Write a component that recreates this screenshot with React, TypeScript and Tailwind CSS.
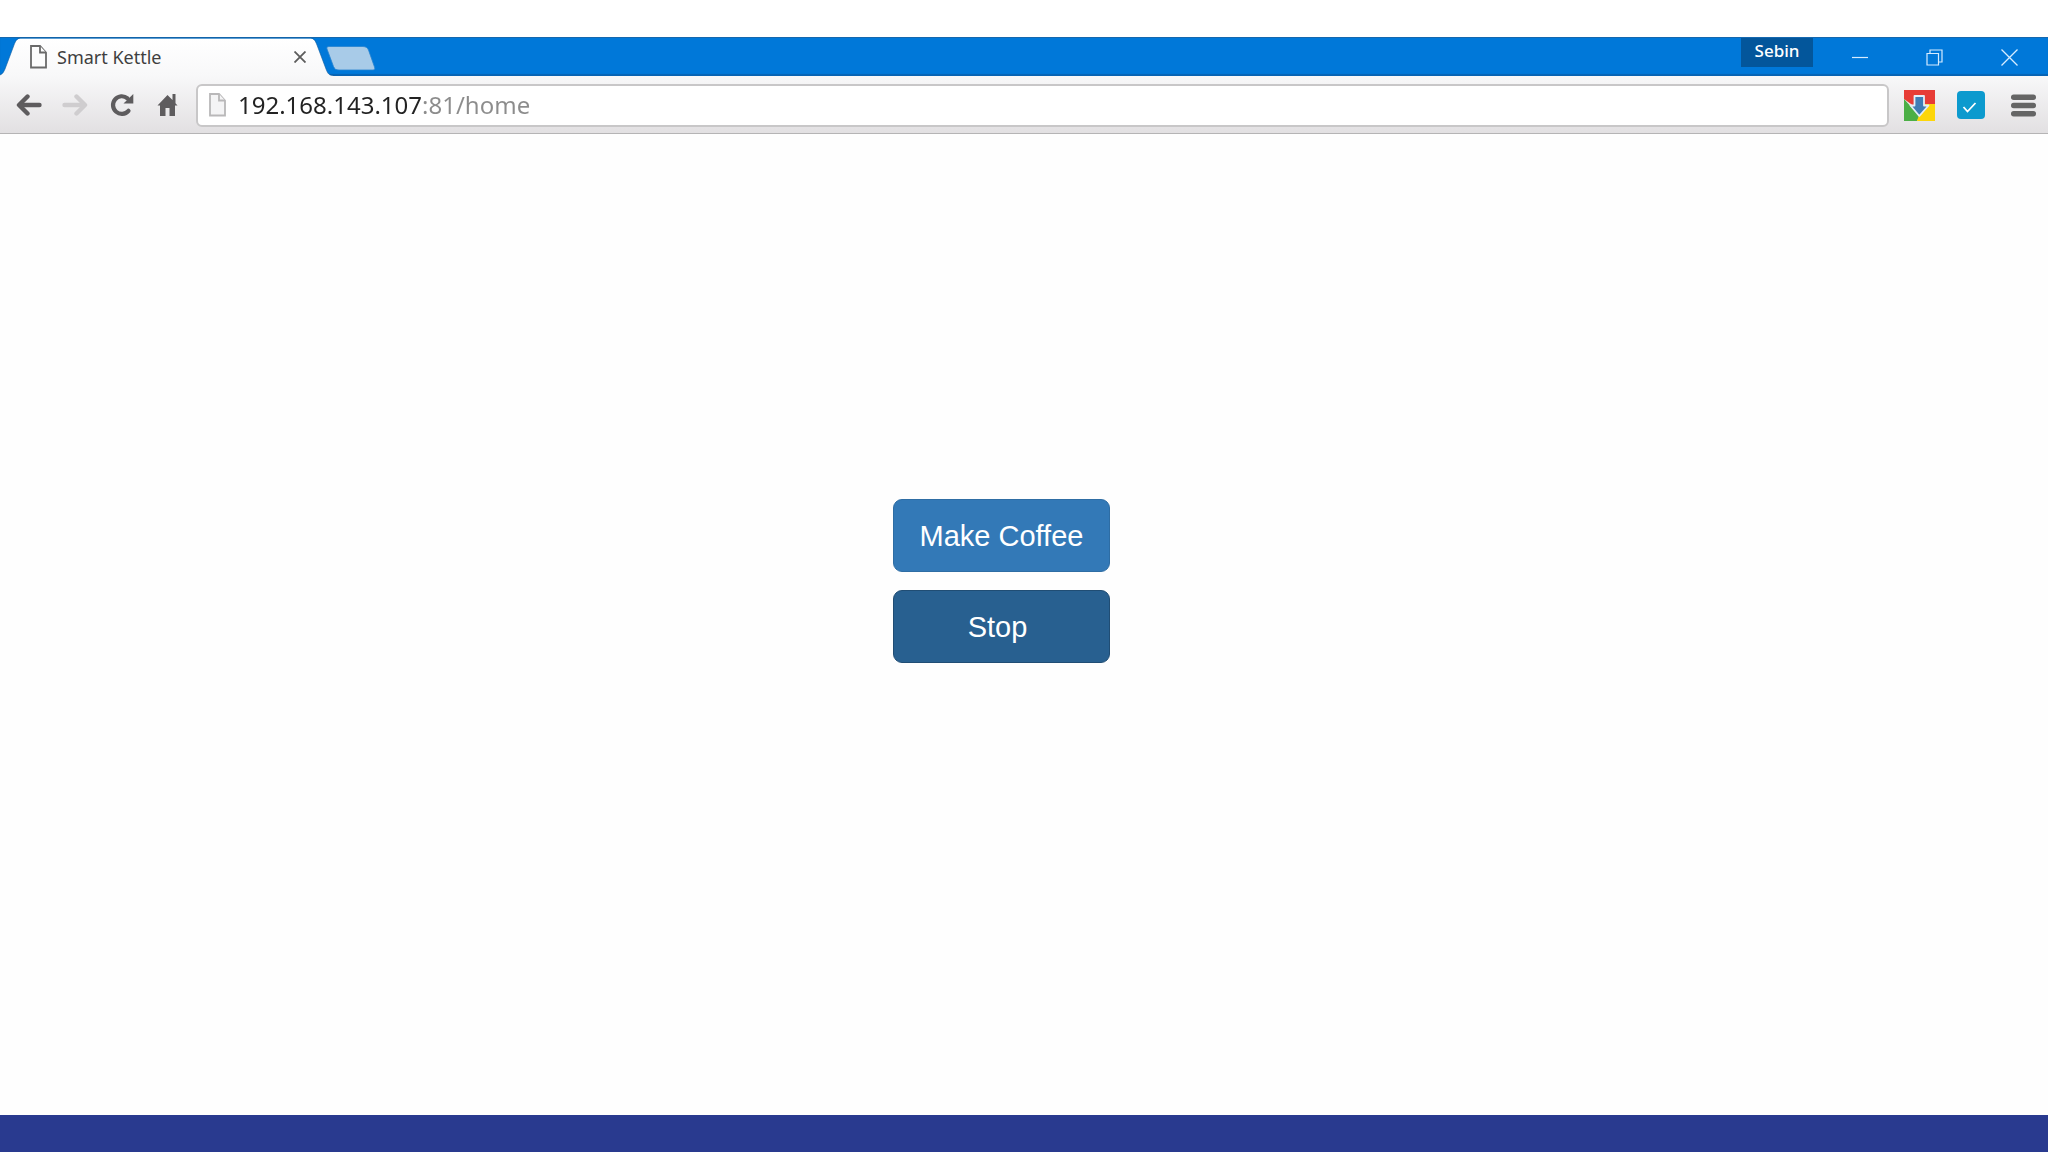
import { useState } from "react";

const WINDOW_BUTTON = "flex h-[38px] w-[75px] items-center justify-center hover:bg-white/10";

function PageIcon({ stroke, fill }: { stroke: string; fill: string }) {
  return (
    <svg width="17" height="24" viewBox="0 0 17 24" fill={fill} stroke={stroke} strokeWidth="1.8" aria-hidden="true">
      <path d="M1 1H10L16 7.500V22.500H1Z" />
      <path d="M10 1V7.500H16" />
    </svg>
  );
}

function TabShape() {
  return (
    <svg className="absolute inset-0" width="334" height="39" viewBox="0 0 334 39" aria-hidden="true">
      <defs>
        <linearGradient id="tab" x1="0" y1="0" x2="0" y2="1">
          <stop offset="0" stopColor="#ffffff" />
          <stop offset="1" stopColor="#f8f8f9" />
        </linearGradient>
      </defs>
      <path
        d="M0 39V38C3 37 4 34 5 32L14 8C16 3 17 1.5 22 1.5H309C314 1.5 315 3 317 8L326 32C328 37 329 38 334 39Z"
        fill="url(#tab)"
      />
      <path d="M0 38C3 37 4 34 5 32L14 8C16 3 17 1 22 1H309C314 1 315 3 317 8L326 32C328 37 329 38.5 334 38.5" fill="none" stroke="#0a5a9e" strokeOpacity="0.6" />
    </svg>
  );
}

function TitleBar() {
  return (
    <div className="flex h-[39px] items-start justify-between border-t border-[#1668ae] bg-[#0078d9] shadow-[inset_0_-2px_1px_#0763b3]">
      <div className="flex items-start">
        <div className="relative -mt-px flex h-[39px] w-[326px] items-center pl-[30px]">
          <TabShape />
          <div className="relative flex flex-1 items-center">
            <PageIcon stroke="#6a6a6a" fill="#fdfdfd" />
            <span className="ml-2.5 flex-1 text-[18px] leading-6 text-[#3f3f3f]">Smart Kettle</span>
            <button aria-label="Close tab" className="mr-[18px] flex h-4 w-4 items-center justify-center">
              <svg width="12" height="12" viewBox="0 0 12 12" stroke="#5c5c5c" strokeWidth="1.8" aria-hidden="true">
                <path d="M0.500 0.500L11.500 11.500M11.500 0.500L0.500 11.500" />
              </svg>
            </button>
          </div>
        </div>
        <button aria-label="New tab" className="mt-2">
          <svg width="50" height="25" viewBox="0 0 50 25" aria-hidden="true">
            <path d="M3 0.5H37C40 0.5 41.5 2 42.500 4L48.500 21C49.300 23 48.500 24 47 24H13C10 24 8.500 23 7.500 20.500L1 3C0.500 1.500 1 0.500 3 0.500Z" fill="#a8cbe8" stroke="#2583d0" strokeWidth="0.8" />
          </svg>
        </button>
      </div>

      <div className="flex items-start pr-px">
        <button className="mr-[9px] h-[29px] w-[72px] bg-[#03569b] pb-1 text-[17px] leading-6 font-medium text-white">
          Sebin
        </button>
        <button aria-label="Minimize" className={WINDOW_BUTTON}>
          <svg width="16" height="16" viewBox="0 0 16 16" stroke="#d6ecff" strokeWidth="1.2" aria-hidden="true">
            <path d="M0 8.500H16" />
          </svg>
        </button>
        <button aria-label="Restore" className={WINDOW_BUTTON}>
          <svg width="17" height="17" viewBox="0 0 17 17" fill="none" stroke="#d6ecff" strokeWidth="1.2" aria-hidden="true">
            <path d="M1 4.500H12.500V16H1Z" />
            <path d="M4 4.500V1H16V13H12.500" />
          </svg>
        </button>
        <button aria-label="Close" className={WINDOW_BUTTON}>
          <svg width="17" height="17" viewBox="0 0 17 17" stroke="#d6ecff" strokeWidth="1.3" aria-hidden="true">
            <path d="M0.500 0.500L16.500 16.500M16.500 0.500L0.500 16.500" />
          </svg>
        </button>
      </div>
    </div>
  );
}

function NavArrow({ color, flip }: { color: string; flip?: boolean }) {
  return (
    <svg width="26" height="22" viewBox="0 0 26 22" fill="none" stroke={color} strokeWidth="4.4" strokeLinecap="round" strokeLinejoin="round" className={flip ? "-scale-x-100" : ""} aria-hidden="true">
      <path d="M11.500 2.500L3 11L11.500 19.500" />
      <path d="M4 11H23.500" />
    </svg>
  );
}

function Toolbar() {
  const [url, setUrl] = useState("192.168.143.107:81/home");

  return (
    <div className="flex h-[58px] items-center border-b border-[#b5b4b5] bg-linear-to-b from-[#f8f8f9] to-[#e2e0e2] pt-px pl-4">
      <div className="flex items-center">
        <button aria-label="Back" className="mr-5"><NavArrow color="#5e5c5e" /></button>
        <button aria-label="Forward" className="mr-[22px]"><NavArrow color="#cfcdcf" flip /></button>
        <button aria-label="Reload" className="mr-[23px]">
          <svg width="24" height="24" viewBox="0 0 24 24" aria-hidden="true">
            <path d="M18.500 17.800A8.800 8.800 0 1 1 17.500 5.300" fill="none" stroke="#5e5c5e" strokeWidth="4.200" strokeLinecap="round" />
            <path d="M23.300 1V10.500H13.500Z" fill="#5e5c5e" />
          </svg>
        </button>
        <button aria-label="Home" className="mr-[18px]">
          <svg width="21" height="24" viewBox="0 0 21 24" fill="#5e5c5e" aria-hidden="true">
            <path d="M10.500 2L0.500 12.500H3V23H8.500V15H12.500V23H18V12.500H20.500L18.500 10.300V1H15.500V7Z" />
          </svg>
        </button>
      </div>

      <label className="flex h-[43px] flex-1 items-center gap-3 rounded-md border-2 border-[#c8c7c8] bg-white pl-[11px]">
        <PageIcon stroke="#b9b8b9" fill="#f4f4f5" />
        {/* host is dark, port and path are grey */}
        <input
          aria-label="Address"
          value={url}
          onChange={e => setUrl(e.target.value)}
          spellCheck={false}
          className="h-9 flex-1 bg-linear-to-r from-[#222222] from-[184px] to-[#8c8c8c] to-[184px] bg-clip-text text-[24px] leading-9 text-transparent caret-black outline-none"
        />
      </label>

      <div className="flex items-center pr-3 pl-[15px]">
        <button aria-label="Downloads" className="mr-[22px]">
          <svg width="31" height="31" viewBox="0 0 31 31" aria-hidden="true">
            <path d="M0 0H31V15H17L15.500 15.500L9 15.500L0 9Z" fill="#e73c36" />
            <path d="M0 9L15.500 26L13 31H0Z" fill="#4caf46" />
            <path d="M31 14V31H13L19 14Z" fill="#fdd60a" />
            <path d="M10.500 6H20V15.500H24.500L15.300 26L6.500 15.500H10.500Z" fill="#3f7db5" stroke="#e3edf6" strokeWidth="1.800" strokeLinejoin="round" />
          </svg>
        </button>
        <button aria-label="Tasks" className="mr-[26px]">
          <svg width="28" height="28" viewBox="0 0 28 28" aria-hidden="true">
            <rect width="28" height="28" rx="4" fill="#0c9ace" />
            <path d="M6.500 16L10.500 20.500L18.500 12" fill="none" stroke="#ffffff" strokeWidth="1.800" />
          </svg>
        </button>
        <button aria-label="Menu">
          <svg width="25" height="23" viewBox="0 0 25 23" fill="#656565" aria-hidden="true">
            <rect y="0.500" width="25" height="5.500" rx="2.700" />
            <rect y="8.700" width="25" height="5.500" rx="2.700" />
            <rect y="16.900" width="25" height="5.500" rx="2.700" />
          </svg>
        </button>
      </div>
    </div>
  );
}

export default function App() {
  return (
    <div className="flex min-h-screen flex-col bg-white pt-[37px] font-['Noto_Sans',sans-serif]">
      <TitleBar />
      <Toolbar />
      <main className="flex flex-1 flex-col items-center gap-[18px] bg-[#fefefe] pt-[365px] pr-[45px] font-['Liberation_Sans',sans-serif]">
        <button className="h-[73px] w-[217px] rounded-[9px] border border-[#2e6da4] bg-[#3379b7] text-[29px] leading-9 text-white">
          Make Coffee
        </button>
        <button className="h-[73px] w-[217px] rounded-[9px] border border-[#204d74] bg-[#286090] text-[29px] leading-9 text-white">
          Stop&nbsp;
        </button>
      </main>
      <footer className="h-[37px] bg-[#293a8f]" />
    </div>
  );
}
